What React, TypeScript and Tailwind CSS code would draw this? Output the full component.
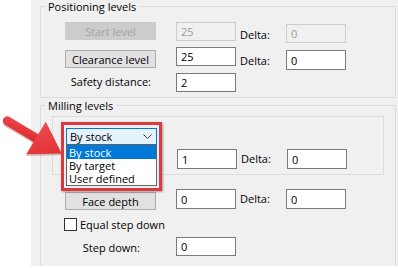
import React from 'react';

const ui = "font-['Open_Sans',sans-serif] text-[11px] leading-[13px] text-black";

function Btn({ label, disabled, className = '' }: { label: string; disabled?: boolean; className?: string }) {
  const look = disabled
    ? 'bg-[#cccccc] border-[#cccccc] text-[#a3a3a3]'
    : 'bg-[#e1e1e1] border-[#adadad] text-black';
  return (
    <div className={`w-[91px] h-[18px] shrink-0 flex items-center justify-center border ${look} ${className}`}>
      {label}
    </div>
  );
}

function Field({ value, disabled, className = '' }: { value: string; disabled?: boolean; className?: string }) {
  const look = disabled
    ? 'bg-[#f0f0f0] border-[#cccccc] text-[#9a9a9a]'
    : 'bg-white border-[#7a7a7a] text-black';
  return (
    <div className={`w-[60px] h-[19px] shrink-0 flex items-center pl-[4px] border ${look} ${className}`}>
      {value}
    </div>
  );
}

function DeltaLabel({ className = '' }: { className?: string }) {
  return <div className={`w-[50px] shrink-0 pl-[4px] ${className}`}>Delta:</div>;
}

function Chevron() {
  return (
    <svg width="9" height="5" viewBox="0 0 9 5" className="shrink-0">
      <polyline points="0.5,0.5 4.5,4.5 8.5,0.5" fill="none" stroke="#3c3c3c" strokeWidth="1" />
    </svg>
  );
}

function Arrow() {
  return (
    <svg width="80" height="180" viewBox="0 0 80 180" className="absolute left-0 top-0 pointer-events-none">
      <defs>
        <linearGradient id="arrowFill" x1="0" y1="0" x2="1" y2="1">
          <stop offset="0" stopColor="#ee4a4e" />
          <stop offset="1" stopColor="#d9282d" />
        </linearGradient>
      </defs>
      <g transform="translate(6 120) rotate(31)">
        <g transform="translate(1 1.5)" opacity="0.25">
          <rect x="-3" y="-4.5" width="44" height="9" rx="4.5" fill="#7a1a1a" />
          <polygon points="35,-19 65,0 35,19" fill="#7a1a1a" />
        </g>
        <rect x="-3" y="-4.5" width="44" height="9" rx="4.5" fill="url(#arrowFill)" />
        <polygon points="35,-19 65,0 35,19" fill="url(#arrowFill)" />
      </g>
    </svg>
  );
}

export default function App() {
  return (
    <div className={`relative w-[398px] h-[268px] bg-white flex overflow-hidden ${ui}`}>
      <div className="ml-[31px] w-[367px] h-[266px] bg-[#f0f0f0] pl-[9px] overflow-hidden flex flex-col">
        <fieldset className="w-[356px] h-[98px] shrink-0 border border-[#dcdcdc] m-0 p-0 pl-[24px]">
          <legend className="ml-[-20px] px-[3px]">Positioning levels</legend>
          <div className="mt-[9px] flex items-start">
            <Btn label="Start level" disabled />
            <Field value="25" disabled className="ml-[20px] h-[18px]" />
            <DeltaLabel className="mt-[6px]" />
            <Field value="0" disabled className="mt-[2px]" />
          </div>
          <div className="mt-[4px] flex items-start">
            <Btn label="Clearance level" className="mt-[3px]" />
            <Field value="25" className="ml-[20px]" />
            <DeltaLabel className="mt-[7px]" />
            <Field value="0" className="mt-[3px] h-[20px]" />
          </div>
          <div className="mt-[3px] flex items-start">
            <div className="w-[91px] shrink-0 text-right pr-[5px] mt-[2px]">Safety distance:</div>
            <Field value="2" className="ml-[20px]" />
          </div>
        </fieldset>

        <fieldset className="mt-[1px] w-[356px] h-[200px] shrink-0 border border-[#dcdcdc] m-0 p-0 pl-[11px]">
          <legend className="ml-[-7px] px-[3px]">Milling levels</legend>

          <div className="mt-[4px] w-[332px] h-[59px] border border-[#dcdcdc] pl-[13px] pt-[11px]">
            <div className="relative w-[91px] z-10">
              <div className="h-[17px] border border-[#0078d7] bg-[#e5f1fb] flex items-center justify-between pl-[3px] pr-[4px]">
                <span>By stock</span>
                <Chevron />
              </div>
              <div className="absolute left-0 top-full w-[91px] border border-[#646464] bg-white flex flex-col leading-[12px]">
                <div className="h-[13px] bg-[#0078d7] text-white pl-[2px] flex items-center">By stock</div>
                <div className="h-[13px] pl-[2px] flex items-center">By target</div>
                <div className="h-[13px] pl-[2px] flex items-center">User defined</div>
              </div>
              <div className="absolute left-[-5px] top-[-6px] w-[101px] h-[69px] border-[3px] border-[#dd3a3f] shadow-[1px_1px_2px_rgba(0,0,0,0.35)]" />
            </div>
            <div className="mt-[4px] flex items-start">
              <div className="w-[91px] shrink-0" />
              <Field value="1" className="ml-[20px] h-[20px]" />
              <DeltaLabel className="mt-[3px]" />
              <Field value="0" className="h-[20px]" />
            </div>
          </div>

          <div className="mt-[14px] pl-[13px] flex items-start">
            <Btn label="Face depth" className="mt-[3px]" />
            <Field value="0" className="ml-[20px] h-[20px]" />
            <DeltaLabel className="mt-[3px]" />
            <Field value="0" className="h-[20px]" />
          </div>

          <div className="mt-[8px] pl-[12px] flex items-center">
            <div className="w-[13px] h-[13px] border border-[#333333] bg-white shrink-0" />
            <span className="ml-[3px]">Equal step down</span>
          </div>

          <div className="mt-[6px] pl-[13px] flex items-start">
            <div className="w-[91px] shrink-0 text-right pr-[16px] mt-[4px]">Step down:</div>
            <Field value="0" className="ml-[20px]" />
          </div>
        </fieldset>
      </div>
      <Arrow />
    </div>
  );
}
